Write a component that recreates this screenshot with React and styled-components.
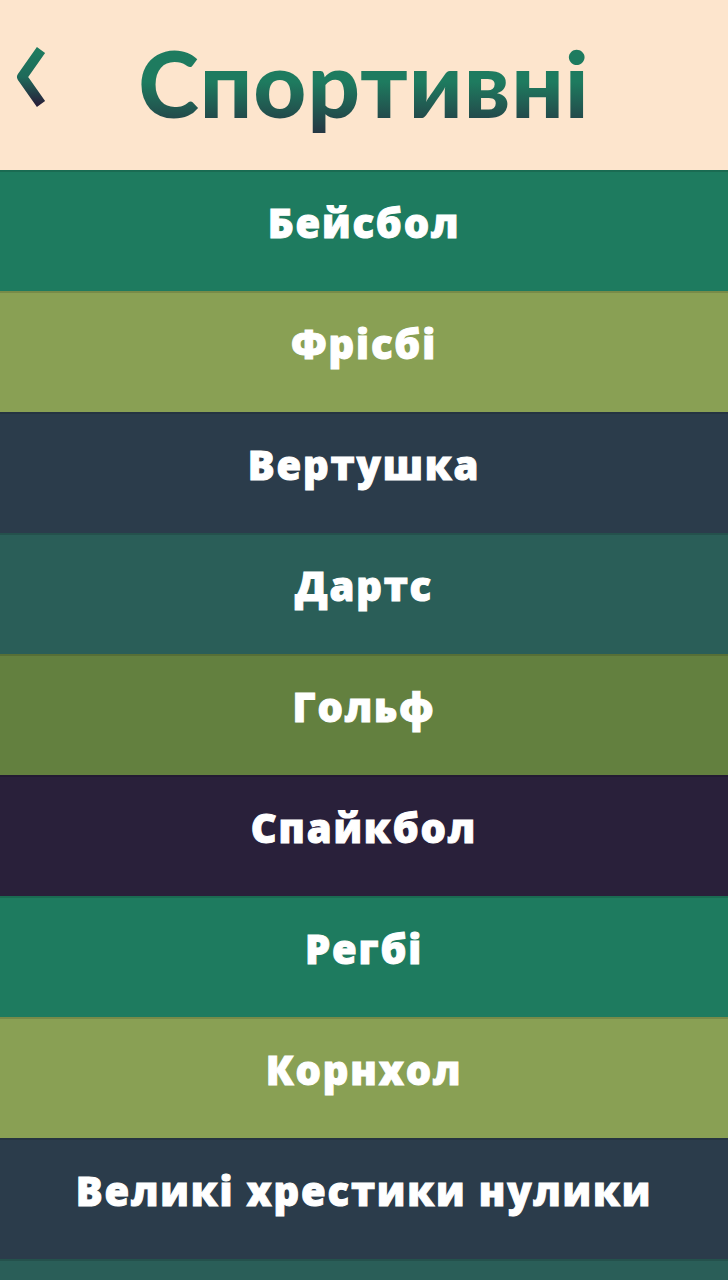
import React from "react";
import styled, { createGlobalStyle } from "styled-components";

const Global = createGlobalStyle`
  html, body { margin: 0; padding: 0; background: #FDE5CD; }
  body { font-family: "Open Sans", "Lato", sans-serif; }
  * { box-sizing: border-box; }
`;

const Page = styled.div`
  width: 728px;
  height: 1280px;
  overflow: hidden;
  display: flex;
  flex-direction: column;
`;

const Header = styled.header`
  height: 170px;
  flex: none;
  background: #FDE5CD;
  display: flex;
  align-items: center;
  justify-content: center;
  position: relative;
`;

const BackButton = styled.button`
  position: absolute;
  left: 14px;
  top: 44px;
  width: 34px;
  height: 68px;
  border: 0;
  padding: 0;
  background: transparent;
  cursor: pointer;
`;

const Title = styled.h1`
  margin: 0;
  margin-top: -4px;
  font-family: "Lato", sans-serif;
  font-weight: 900;
  font-size: 92px;
  letter-spacing: 1px;
  line-height: 1;
  background: linear-gradient(180deg, #1E7B5F 0%, #1E7B5F 40%, #27213A 100%);
  -webkit-background-clip: text;
  background-clip: text;
  color: transparent;
  padding: 0 4px 20px;
  margin-bottom: -20px;
`;

const List = styled.nav`
  display: flex;
  flex-direction: column;
`;

const Row = styled.div`
  height: 121px;
  flex: none;
  background: ${(p) => p.$bg};
  display: flex;
  align-items: center;
  justify-content: center;
  box-shadow: inset 0 2px 0 rgba(0, 0, 0, 0.13);
  color: #ffffff;
  font-family: "Open Sans", sans-serif;
  font-weight: 800;
  font-size: 40px;
  letter-spacing: 1.8px;
  -webkit-text-stroke: 1px #ffffff;
  padding-bottom: 16px;
`;

const COLORS = ["#1E7B5F", "#89A054", "#2B3C4B", "#2A5E58", "#63803F", "#29203A"];

const ITEMS = [
  "Бейсбол",
  "Фрісбі",
  "Вертушка",
  "Дартс",
  "Гольф",
  "Спайкбол",
  "Регбі",
  "Корнхол",
  "Великі хрестики нулики",
  "",
];

export default function App() {
  return (
    <Page>
      <Global />
      <Header>
        <BackButton aria-label="Назад">
          <svg width="34" height="68" viewBox="0 0 34 68">
            <defs>
              <linearGradient id="chev" x1="0" y1="0" x2="0" y2="1">
                <stop offset="0" stopColor="#1E7B5F" />
                <stop offset="0.5" stopColor="#1E6A5A" />
                <stop offset="1" stopColor="#27213A" />
              </linearGradient>
            </defs>
            <path
              d="M27 6 L8 33 L27 60"
              fill="none"
              stroke="url(#chev)"
              strokeWidth="10"
              strokeLinejoin="round"
            />
          </svg>
        </BackButton>
        <Title>Спортивні</Title>
      </Header>
      <List>
        {ITEMS.map((t, i) => (
          <Row key={i} $bg={COLORS[i % COLORS.length]}>
            {t}
          </Row>
        ))}
      </List>
    </Page>
  );
}
